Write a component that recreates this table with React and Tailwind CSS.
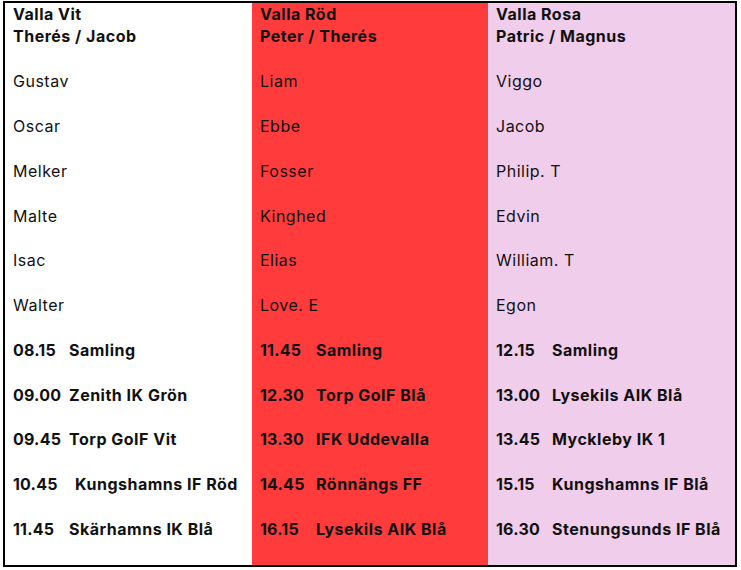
const columns = [
  {
    team: "Valla Vit",
    coaches: "Therés / Jacob",
    bg: "bg-white",
    players: ["Gustav", "Oscar", "Melker", "Malte", "Isac", "Walter"],
    games: [
      ["08.15", "Samling"],
      ["09.00", "Zenith IK Grön"],
      ["09.45", "Torp GoIF Vit"],
      ["10.45", "Kungshamns IF Röd", true],
      ["11.45", "Skärhamns IK Blå"],
    ],
  },
  {
    team: "Valla Röd",
    coaches: "Peter / Therés",
    bg: "bg-[#ff3b3b]",
    players: ["Liam", "Ebbe", "Fosser", "Kinghed", "Elias", "Love. E"],
    games: [
      ["11.45", "Samling"],
      ["12.30", "Torp GoIF Blå"],
      ["13.30", "IFK Uddevalla"],
      ["14.45", "Rönnängs FF"],
      ["16.15", "Lysekils AIK Blå"],
    ],
  },
  {
    team: "Valla Rosa",
    coaches: "Patric / Magnus",
    bg: "bg-[#f0cdea]",
    players: ["Viggo", "Jacob", "Philip. T", "Edvin", "William. T", "Egon"],
    games: [
      ["12.15", "Samling"],
      ["13.00", "Lysekils AIK Blå"],
      ["13.45", "Myckleby IK 1"],
      ["15.15", "Kungshamns IF Blå"],
      ["16.30", "Stenungsunds IF Blå"],
    ],
  },
];

const Column = ({ col }) => (
  <div className={`flex flex-col pl-2 pr-1 ${col.bg}`}>
    <div className="h-[22.4px] font-bold">{col.team}</div>
    <div className="h-[22.4px] font-bold">{col.coaches}</div>

    {/* players, one empty line between each */}
    {col.players.map((name) => (
      <div key={name} className="mt-[22.4px] h-[22.4px]">
        {name}
      </div>
    ))}

    {/* match times */}
    {col.games.map(([time, what, wide]) => (
      <div key={time} className="mt-[22.4px] flex h-[22.4px] whitespace-nowrap font-bold">
        <span className={wide ? "w-[62px] shrink-0 tracking-[0.2px]" : "w-[56px] shrink-0 tracking-[0.2px]"}>
          {time}
        </span>
        <span>{what}</span>
      </div>
    ))}
  </div>
);

export default function App() {
  return (
    <div className="h-[570px] w-[741px] bg-white pl-[3px] pt-[1px]">
      <div
        className="grid h-[566px] w-[734px] grid-cols-[247px_236px_247px] border-2 border-black text-[16px] leading-[22.4px] tracking-[0.5px] text-[#111]"
        style={{ fontFamily: "Inter, 'Noto Sans', sans-serif" }}
      >
        {columns.map((col) => (
          <Column key={col.team} col={col} />
        ))}
      </div>
    </div>
  );
}
